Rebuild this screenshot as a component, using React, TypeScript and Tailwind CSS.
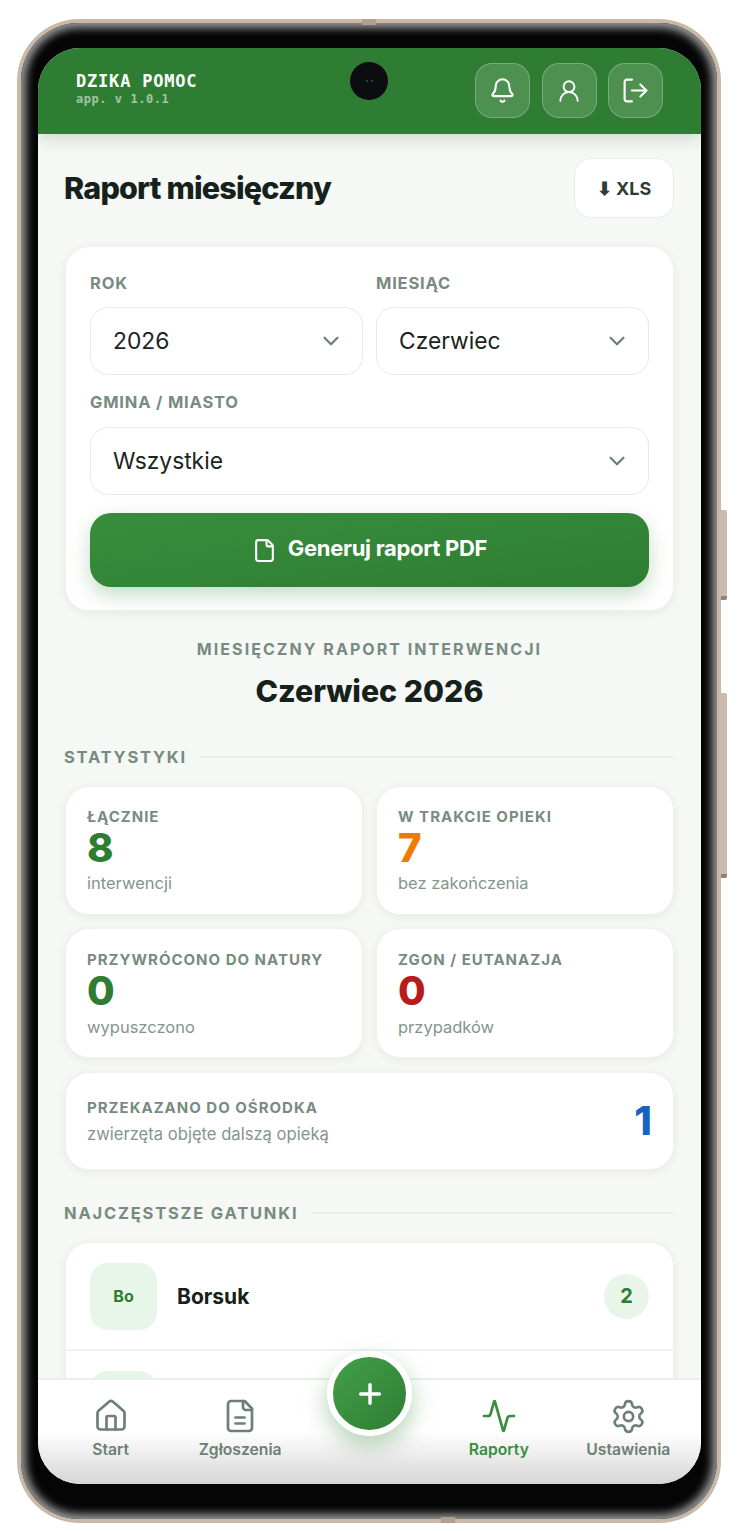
import React from 'react';
import { Activity, Bell, ChevronDown, File, House, LogOut, Plus, Settings, UserRound } from 'lucide-react';

function Select({ value }: { value: string }) {
  return (
    <div className="flex h-[68px] items-center justify-between rounded-[18px] border border-[#e3ebe6] bg-white pl-[22px] pr-[18px] text-[22.8px] text-[#1c2420]">
      <span className="pt-[1px]">{value}</span>
      <ChevronDown className="size-[26px] text-[#6b7f73]" strokeWidth={2} />
    </div>
  );
}

function FieldLabel({ children }: { children: React.ReactNode }) {
  return <div className="text-[16.5px] font-bold leading-[20px] tracking-[0.8px] text-[#788b80]">{children}</div>;
}

function SectionTitle({ children }: { children: React.ReactNode }) {
  return (
    <div className="flex items-center gap-[13px] pt-[1px]">
      <span className="-ml-px text-[16.5px] font-bold leading-[20px] tracking-[1.8px] text-[#788b80]">{children}</span>
      <span className="h-[2px] flex-1 bg-[#e6eee9]" />
    </div>
  );
}

function StatCard({ label, value, color, note, tall }: { label: string; value: string; color: string; note: string; tall?: boolean }) {
  return (
    <div className={`${tall ? 'h-[129px] pt-[21px]' : 'h-[130px] pt-[22px]'} rounded-[24px] border border-[#eef3ef] bg-white px-[21px] shadow-[0_2px_8px_rgba(30,70,45,0.07)]`}>
      <div className="whitespace-nowrap text-[15px] font-bold leading-[18px] tracking-[1px] text-[#788b80]">{label}</div>
      <div className={`text-[40px] font-extrabold leading-[43px] ${color}`}>{value}</div>
      <div className={`${tall ? 'mt-[3px]' : 'mt-[4px]'} text-[16.5px] leading-[22px] text-[#84958b]`}>{note}</div>
    </div>
  );
}

function NavItem({ icon, label, active, raised }: { icon: React.ReactNode; label: string; active?: boolean; raised?: boolean }) {
  return (
    <div className={`flex flex-col items-center ${raised ? 'gap-[5px]' : 'gap-[6px]'} ${active ? 'text-[#388e3c]' : 'text-[#6c8074]'}`}>
      {icon}
      <span className="whitespace-nowrap text-[15.7px] font-semibold leading-[20px]">{label}</span>
    </div>
  );
}

function ReportIcon() {
  return (
    <svg className="size-[36px]" viewBox="0 0 24 24" fill="none" stroke="currentColor" strokeWidth={1.8} strokeLinecap="round" strokeLinejoin="round">
      <path d="M15 2H6a2 2 0 0 0-2 2v16a2 2 0 0 0 2 2h12a2 2 0 0 0 2-2V7z" />
      <path d="M14 2v4a2 2 0 0 0 2 2h4" />
      <path d="M15 13H9" />
      <path d="M15 17H9" />
    </svg>
  );
}

function HeaderButton({ children }: { children: React.ReactNode }) {
  return (
    <div className="flex size-[55px] items-center justify-center rounded-[17px] border border-white/25 bg-white/15 text-white">
      {children}
    </div>
  );
}

export default function App() {
  return (
    <div className="h-[1531px] w-[737px] overflow-hidden bg-white pl-[17px] pt-[19px] font-['Inter',sans-serif]">
      <div className="relative h-[1504px] w-[704px] rounded-[62px] bg-[#c9b9a8] p-[4px]">
        {/* side buttons */}
        <div className="absolute right-[-6px] top-[491px] h-[90px] w-[6px] rounded-r-[2px] border-b-[4px] border-[#8d8478] bg-[#cbbcad]" />
        <div className="absolute right-[-6px] top-[674px] h-[185px] w-[6px] rounded-r-[2px] border-b-[4px] border-[#8d8478] bg-[#cbbcad]" />
        <div className="absolute left-[345px] top-0 h-[6px] w-[14px] bg-[#b3a08c]" />
        <div className="absolute bottom-0 left-[424px] h-[6px] w-[14px] bg-[#b3a08c]" />

        <div className="h-full rounded-[58px] bg-[#050505] pb-[35px] pl-[17px] pr-[16px] pt-[25px] shadow-[inset_0_0_8px_5px_#9a9a9a]">
          <div className="relative flex h-[1436px] w-[663px] flex-col overflow-hidden rounded-[42px] bg-[#f5f8f5]">
            <header className="flex h-[86px] shrink-0 items-start justify-between bg-[#2e7d32] pl-[38px] pr-[38px] pt-[15px] shadow-[0_4px_16px_rgba(20,60,30,0.18)]">
              <div className="pt-[8px] font-['DejaVu_Sans_Mono',monospace]">
                <div className="text-[17px] font-bold leading-[20px] tracking-[0.8px] text-white">DZIKA POMOC</div>
                <div className="pt-px text-[12px] font-bold leading-[14px] tracking-[0.55px] text-white/55">app. v 1.0.1</div>
              </div>
              <div className="flex gap-[11.5px]">
                <HeaderButton><Bell className="size-[27px]" strokeWidth={1.8} /></HeaderButton>
                <HeaderButton><UserRound className="size-[26px]" strokeWidth={1.8} /></HeaderButton>
                <HeaderButton><LogOut className="size-[29px]" strokeWidth={1.8} /></HeaderButton>
              </div>
            </header>

            <main className="min-h-0 flex-1 overflow-hidden px-[27px] pt-[24px]">
              <div className="flex items-center justify-between">
                <h1 className="-ml-px text-[30.5px] font-extrabold tracking-[-0.8px] text-[#15211a]">Raport miesięczny</h1>
                <div className="flex h-[60px] w-[100px] items-center justify-center rounded-[17px] border border-[#e6eee9] bg-white text-[18px] font-bold text-[#2f3d35]">⬇ XLS</div>
              </div>

              <section className="mt-[28px] h-[365px] rounded-[24px] border border-[#eef3ef] bg-white px-[24px] pt-[26px] shadow-[0_2px_10px_rgba(30,70,45,0.07)]">
                <div className="grid grid-cols-2 gap-x-[13px]">
                  <div>
                    <FieldLabel>ROK</FieldLabel>
                    <div className="mt-[14px]"><Select value="2026" /></div>
                  </div>
                  <div>
                    <FieldLabel>MIESIĄC</FieldLabel>
                    <div className="mt-[14px]"><Select value="Czerwiec" /></div>
                  </div>
                </div>
                <div className="mt-[17px]"><FieldLabel>GMINA / MIASTO</FieldLabel></div>
                <div className="mt-[15px]"><Select value="Wszystkie" /></div>
                <div className="mt-[18px] flex h-[74px] items-center justify-center gap-[11px] rounded-[21px] bg-gradient-to-br from-[#388e3c] to-[#2e7d32] text-[22px] font-bold text-white shadow-[0_8px_20px_rgba(46,125,50,0.28)]">
                  <File className="size-[25px]" strokeWidth={2} />
                  <span className="pb-[3px] tracking-[-0.3px]">Generuj raport PDF</span>
                </div>
              </section>

              <div className="mt-[28px] text-center text-[16px] font-bold leading-[20px] tracking-[2.05px] text-[#788b80]">MIESIĘCZNY RAPORT INTERWENCJI</div>
              <div className="mt-[12px] text-center text-[30.3px] font-extrabold leading-[40px] text-[#15211a]">Czerwiec 2026</div>

              <div className="mt-[35px]"><SectionTitle>STATYSTYKI</SectionTitle></div>

              <div className="mt-[19px] grid grid-cols-2 gap-x-[13px] gap-y-[13px]">
                <StatCard tall label="ŁĄCZNIE" value="8" color="text-[#2e7d32]" note="interwencji" />
                <StatCard tall label="W TRAKCIE OPIEKI" value="7" color="text-[#ef7c00]" note="bez zakończenia" />
                <StatCard label="PRZYWRÓCONO DO NATURY" value="0" color="text-[#2e7d32]" note="wypuszczono" />
                <StatCard label="ZGON / EUTANAZJA" value="0" color="text-[#b71c1c]" note="przypadków" />
              </div>

              <div className="mt-[14px] flex h-[98px] items-center justify-between rounded-[24px] border border-[#eef3ef] bg-white pl-[21px] pr-[21px] shadow-[0_2px_8px_rgba(30,70,45,0.07)]">
                <div className="pt-[1px]">
                  <div className="text-[15px] font-bold leading-[18px] tracking-[1px] text-[#788b80]">PRZEKAZANO DO OŚRODKA</div>
                  <div className="mt-[6px] text-[16.6px] leading-[22px] text-[#84958b]">zwierzęta objęte dalszą opieką</div>
                </div>
                <div className="text-[40px] font-extrabold text-[#1565c0]">1</div>
              </div>

              <div className="mt-[32px]"><SectionTitle>NAJCZĘSTSZE GATUNKI</SectionTitle></div>

              <section className="mt-[19px] rounded-[24px] border border-[#eef3ef] bg-white shadow-[0_2px_8px_rgba(30,70,45,0.07)]">
                <div className="flex h-[108px] items-center justify-between border-b-2 border-[#eff4f0] px-[24px]">
                  <div className="flex items-center gap-[20px]">
                    <div className="flex size-[67px] items-center justify-center rounded-[18px] bg-[#e8f5e9] text-[16px] font-bold text-[#2e7d32]">Bo</div>
                    <span className="pt-[1px] text-[21px] font-bold text-[#15211a]">Borsuk</span>
                  </div>
                  <div className="flex size-[45px] items-center justify-center rounded-full bg-[#e8f5e9] text-[20px] font-bold text-[#2e7d32]">2</div>
                </div>
                <div className="h-[60px] px-[24px] pt-[20px]">
                  <div className="size-[67px] rounded-[18px] bg-[#e8f5e9]" />
                </div>
              </section>
            </main>

            <nav className="grid h-[106px] shrink-0 grid-cols-5 border-t-2 border-[#e9f0ec] bg-gradient-to-b from-white from-50% to-[#d6d6d6] px-[8px] pt-[18px]">
              <NavItem icon={<House className="size-[36px]" strokeWidth={1.8} />} label="Start" />
              <NavItem icon={<ReportIcon />} label="Zgłoszenia" />
              <div />
              <NavItem active icon={<Activity className="size-[36px]" strokeWidth={1.8} />} label="Raporty" />
              <NavItem raised icon={<Settings className="size-[37px]" strokeWidth={1.7} />} label="Ustawienia" />
            </nav>

            {/* floating add button */}
            <div className="absolute bottom-[48px] left-[289px] flex size-[85px] items-center justify-center rounded-full border-[6px] border-white bg-gradient-to-br from-[#43a047] to-[#2e7d32] text-white shadow-[0_10px_24px_rgba(46,125,50,0.35)]">
              <Plus className="size-[32px]" strokeWidth={2.6} />
            </div>

            {/* camera */}
            <div className="absolute left-[312px] top-[14px] flex size-[38px] items-center justify-center gap-[3px] rounded-full bg-[#0b0d10]">
              <span className="size-[2px] rounded-full bg-[#36505c]" />
              <span className="size-[2px] rounded-full bg-[#36505c]" />
            </div>
          </div>
        </div>
      </div>
    </div>
  );
}
